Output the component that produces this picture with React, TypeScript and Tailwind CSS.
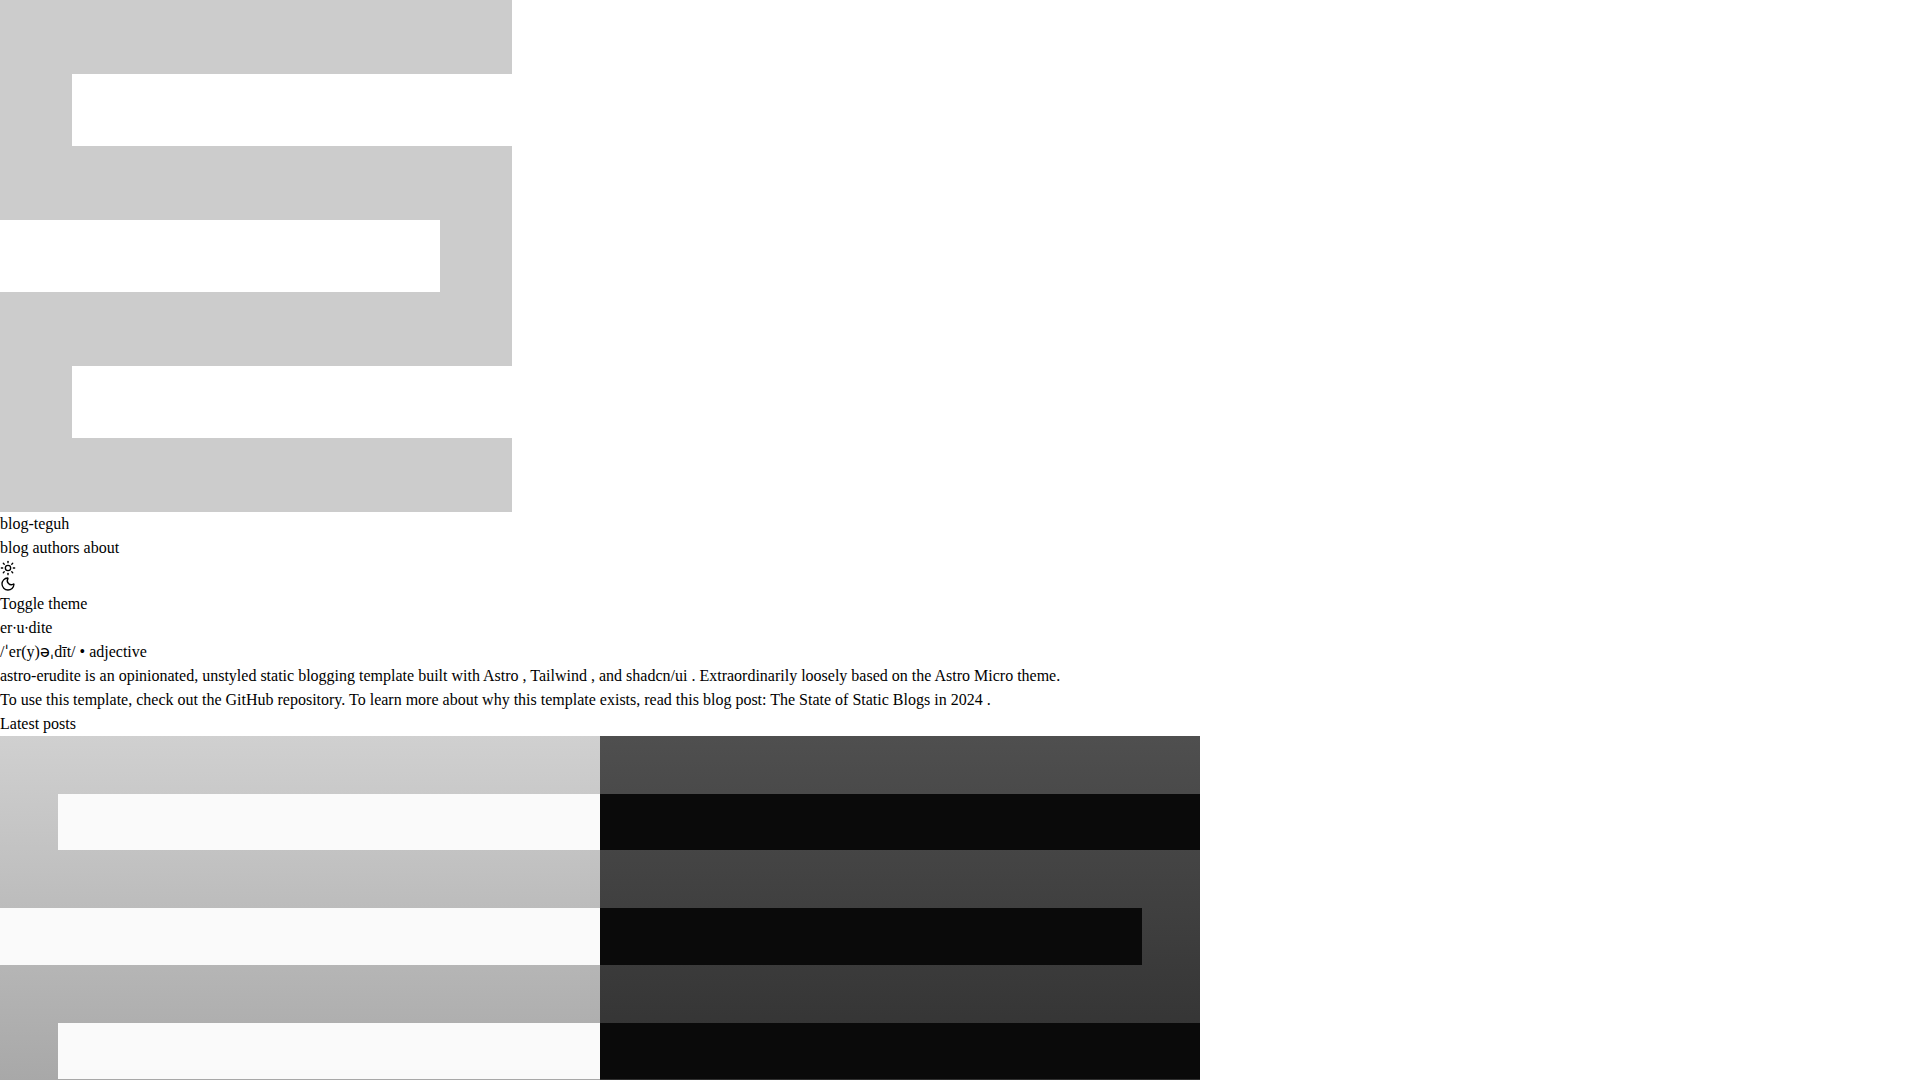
import React from 'react';
import { Moon, Sun } from 'lucide-react';

const navLinks = ['blog', 'authors', 'about'];

function Logo() {
  return (
    <svg width="512" height="512" viewBox="0 0 512 512" shapeRendering="crispEdges" className="block" aria-hidden="true">
      <path fill="#cccccc" d="M0 0H512V74H72V146H512V366H72V438H512V512H0V292H440V220H0Z" />
    </svg>
  );
}

function PostCover() {
  return (
    <svg width="1200" height="630" viewBox="0 0 1200 630" shapeRendering="crispEdges" className="block" aria-hidden="true">
      <defs>
        <linearGradient id="cover-light" x1="0" y1="0" x2="0" y2="1">
          <stop offset="0" stopColor="#d0d0d0" />
          <stop offset="1" stopColor="#878787" />
        </linearGradient>
        <linearGradient id="cover-dark" x1="0" y1="0" x2="0" y2="1">
          <stop offset="0" stopColor="#4f4f4f" />
          <stop offset="1" stopColor="#171717" />
        </linearGradient>
      </defs>
      <rect width="600" height="630" fill="url(#cover-light)" />
      <rect x="600" width="600" height="630" fill="url(#cover-dark)" />
      <path fill="#fafafa" d="M58 58H600V114H58ZM0 172H600V229H0ZM58 287H600V343H58ZM0 401H600V458H0ZM58 516H600V572H58Z" />
      <path fill="#0a0a0a" d="M600 58H1200V114H600ZM600 172H1142V229H600ZM600 287H1200V343H600ZM600 401H1142V458H600ZM600 516H1200V572H600Z" />
    </svg>
  );
}

// Phonetic marks come from the sans face
function Phonetic({ children }: { children: React.ReactNode }) {
  return <span className="font-['DejaVu_Sans',sans-serif] leading-none">{children}</span>;
}

export default function App() {
  return (
    <div className="bg-white font-['Liberation_Serif',serif] text-base text-black">
      <header>
        <a href="#home" className="block">
          <Logo />
          blog-teguh
        </a>
        <nav className="flex gap-1">
          {navLinks.map((label) => (
            <a key={label} href={`#${label}`}>{label}</a>
          ))}
        </nav>
        <button type="button" className="block text-left">
          <Sun className="block size-4" />
          <Moon className="block size-4" />
          <span>Toggle theme</span>
        </button>
      </header>

      <main>
        <section>
          <h1>er∙u∙dite</h1>
          <p>
            /<Phonetic>ˈ</Phonetic>er(y)<Phonetic>əˌ</Phonetic>dīt/ • adjective
          </p>
          <p>
            astro-erudite is an opinionated, unstyled static blogging template built with{' '}
            <a href="#astro">Astro</a> , <a href="#tailwind">Tailwind</a> , and{' '}
            <a href="#shadcn">shadcn/ui</a> . Extraordinarily loosely based on the{' '}
            <a href="#astro-micro">Astro Micro</a> theme.
          </p>
          <p>
            To use this template, check out the <a href="#github">GitHub</a> repository. To learn more about why this
            template exists, read this blog post: <a href="#static-blogs">The State of Static Blogs in 2024</a> .
          </p>
        </section>
        <section>
          <h2>Latest posts</h2>
          <a href="#post" className="block" aria-label="Latest post">
            <PostCover />
          </a>
        </section>
      </main>
    </div>
  );
}
